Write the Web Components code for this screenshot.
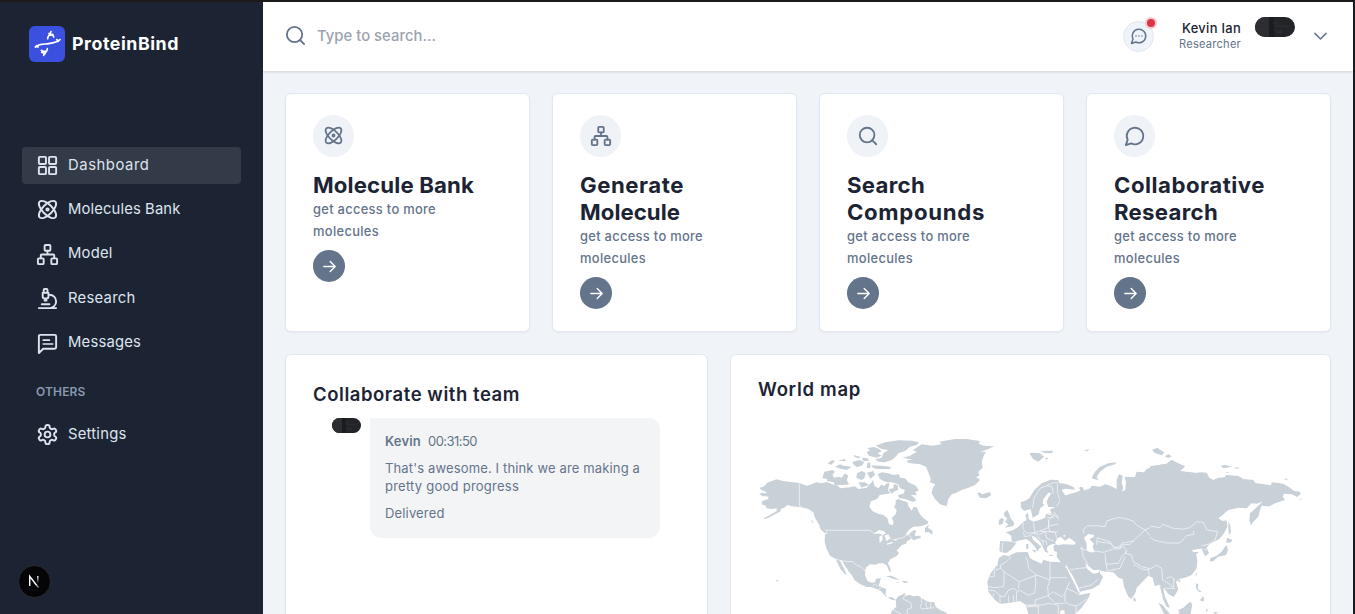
<!DOCTYPE html>
<html lang="en">
<head>
<meta charset="utf-8">
<title>ProteinBind</title>
<style>
html,body{margin:0;height:100%;overflow:hidden}
body{font-family:Inter,"Open Sans",sans-serif;font-size:14.8px;color:#64748b;background:#f0f3f8}
</style>
</head>
<body>
<pb-app></pb-app>
<script>
const define = (name, html, init) => customElements.define(name, class extends HTMLElement {
  connectedCallback() {
    if (this.shadowRoot) return;
    this.attachShadow({ mode: "open" }).innerHTML = typeof html === "function" ? html(this) : html;
    if (init) init(this);
  }
});

/* A single line of text, tracked to the width in its w attribute. */
define("pb-text", `<style>:host{display:block;white-space:nowrap}span{display:inline-block;margin-top:-1px;padding-bottom:1px;vertical-align:top}</style><span><slot></slot></span>`, el => {
  const span = el.shadowRoot.querySelector("span");
  const natural = span.getBoundingClientRect().width;
  const target = parseFloat(el.getAttribute("w"));
  if (target) span.style.letterSpacing = ((target - natural) / el.textContent.length).toFixed(3) + "px";
});

const ICONS = {
  grid: '<rect x="3" y="3" width="7.4" height="7.4" rx="1"/><rect x="13.6" y="3" width="7.4" height="7.4" rx="1"/><rect x="3" y="13.6" width="7.4" height="7.4" rx="1"/><rect x="13.6" y="13.6" width="7.4" height="7.4" rx="1"/>',
  atom: '<circle cx="12" cy="12" r="1.2"/><path d="M20.2 20.2c2.04-2.03.02-7.36-4.5-11.9-4.54-4.52-9.87-6.54-11.9-4.5-2.04 2.03-.02 7.36 4.5 11.9 4.54 4.52 9.87 6.54 11.9 4.5Z"/><path d="M15.7 15.7c4.52-4.54 6.54-9.87 4.5-11.9-2.03-2.04-7.36-.02-11.9 4.5-4.52 4.54-6.54 9.87-4.5 11.9 2.03 2.04 7.36.02 11.9-4.5Z"/>',
  tree: '<rect x="9" y="2" width="6" height="6" rx="1"/><rect x="2" y="16" width="6" height="6" rx="1"/><rect x="16" y="16" width="6" height="6" rx="1"/><path d="M5 16v-3a1 1 0 0 1 1-1h12a1 1 0 0 1 1 1v3M12 8v4"/>',
  scope: '<path d="M6 18h8M3 22h18M14 22a7 7 0 1 0 0-14h-1M9 14h2M9 12a2 2 0 0 1-2-2V6h6v4a2 2 0 0 1-2 2ZM12 6V3a1 1 0 0 0-1-1H9a1 1 0 0 0-1 1v3"/>',
  message: '<path d="M21 16a1.500 1.500 0 0 1-1.500 1.500H7.500L3 22V4.500A1.500 1.500 0 0 1 4.500 3h15A1.500 1.500 0 0 1 21 4.500Z"/><path stroke-width="1.700" d="M7.500 8.500h6.500M7.500 12.500h10"/>',
  gear: '<path d="M12.22 2h-.44a2 2 0 0 0-2 2v.18a2 2 0 0 1-1 1.73l-.43.25a2 2 0 0 1-2 0l-.15-.08a2 2 0 0 0-2.73.73l-.22.38a2 2 0 0 0 .73 2.73l.15.1a2 2 0 0 1 1 1.72v.51a2 2 0 0 1-1 1.74l-.15.09a2 2 0 0 0-.73 2.73l.22.38a2 2 0 0 0 2.73.73l.15-.08a2 2 0 0 1 2 0l.43.25a2 2 0 0 1 1 1.73V20a2 2 0 0 0 2 2h.44a2 2 0 0 0 2-2v-.18a2 2 0 0 1 1-1.73l.43-.25a2 2 0 0 1 2 0l.15.08a2 2 0 0 0 2.73-.73l.22-.39a2 2 0 0 0-.73-2.73l-.15-.08a2 2 0 0 1-1-1.74v-.5a2 2 0 0 1 1-1.74l.15-.09a2 2 0 0 0 .73-2.73l-.22-.38a2 2 0 0 0-2.73-.73l-.15.08a2 2 0 0 1-2 0l-.43-.25a2 2 0 0 1-1-1.73V4a2 2 0 0 0-2-2z"/><circle cx="12" cy="12" r="3"/>',
  search: '<circle cx="11" cy="11" r="8"/><path d="m21 21-4.3-4.3"/>',
  chat: '<path d="M7.9 20A9 9 0 1 0 4 16.1L2 22Z"/>',
  dots: '<path d="M7.9 20A9 9 0 1 0 4 16.1L2 22Z"/><path d="M8 12h.01M12 12h.01M16 12h.01"/>',
  arrow: '<path d="M4 12h16M13 5l7 7-7 7"/>',
  down: '<path d="m3 7 9 9 9-9"/>'
};
define("pb-icon", el => `<style>:host{display:block;flex:none}svg{display:block}</style>
<svg width="${el.getAttribute("size")}" height="${el.getAttribute("size")}" viewBox="0 0 24 24" fill="none" stroke="currentColor" stroke-width="${el.getAttribute("stroke") || 2}" stroke-linecap="round" stroke-linejoin="round">${ICONS[el.getAttribute("name")]}</svg>`);

define("pb-avatar", `<style>:host{display:block;flex:none;border-radius:99px;overflow:hidden}svg{display:block;width:100%;height:100%}</style>
<svg viewBox="0 0 40 20" preserveAspectRatio="none"><path fill="#222427" d="M0 0h40v20H0z"/><path fill="#2b2d31" d="M0 0h14v20H0z"/><path fill="#1b1c1f" d="M14 0h5v20h-5z"/><path stroke="#34363a" stroke-width=".7" d="M3 4h7M2 8h3M3 13h9M18 6h5M20 9h14M20 14h7M22 15.5h5"/></svg>`);

define("pb-nav-item", el => `<style>
:host{display:flex;align-items:center;gap:9px;height:37px;padding:0 14px;border-radius:4px;color:#dee4ee}
:host([active]){background:#333a48}
pb-icon{width:23px}</style>
<pb-icon name="${el.getAttribute("icon")}" size="${el.getAttribute("size") || 23}"></pb-icon><pb-text w="${el.getAttribute("w")}">${el.getAttribute("label")}</pb-text>`);

define("pb-sidebar", `<style>
:host{display:flex;flex-direction:column;width:263px;flex:none;background:#1c2434;box-sizing:border-box;padding:24px 22px 0;position:relative}
.brand{display:flex;align-items:center;gap:7px;padding-left:7px;height:36px;color:#fff;font-weight:650;font-size:17.8px}
.brand svg{display:block}
nav{display:flex;flex-direction:column;gap:7.4px;margin-top:85px}
h3{margin:20.500px 0 0;padding-left:14px;font-size:12px;line-height:22px;font-weight:600;color:#8a99af}
.last{margin-top:12px}
.dev{position:absolute;left:18px;bottom:16px;width:33px;height:33px;border-radius:50%;background:#050507;border:1.5px solid #2b2b2d;box-sizing:border-box}
.dev svg{display:block}
</style>
<div class="brand"><svg width="36" height="36" viewBox="87 78 108 108"><rect x="87" y="78" width="108" height="108" rx="18" fill="#3c50e0"/><g fill="none" stroke="#fff" stroke-width="5" stroke-linecap="round" stroke-linejoin="round"><path d="M106 141C115 134 123 132 134 132S154 129 161 128S176 123 180 119M170 119l5 5M109 137l5 4"/><path d="M143 116C143 107 151 103 153 95M147 100l8 5M147 106l11-3 3 8"/><path d="M124 151l5 3 9 0M125 157l10 4M142 146C142 156 133 159 131 166" /></g></svg><pb-text w="107">ProteinBind</pb-text></div>
<nav>
<pb-nav-item active icon="grid" w="81.5" label="Dashboard"></pb-nav-item>
<pb-nav-item icon="atom" w="112.5" label="Molecules Bank"></pb-nav-item>
<pb-nav-item icon="tree" w="44.5" label="Model"></pb-nav-item>
<pb-nav-item icon="scope" w="67.5" label="Research"></pb-nav-item>
<pb-nav-item icon="message" w="73" label="Messages"></pb-nav-item>
</nav>
<h3><pb-text w="49.5">OTHERS</pb-text></h3>
<pb-nav-item class="last" icon="gear" w="58.5" label="Settings"></pb-nav-item>
<div class="dev"><svg width="30" height="30" viewBox="0 0 30 30" fill="none" stroke-width="1.4"><defs><linearGradient id="a" x1="0" y1="0" x2="0" y2="1"><stop stop-color="#fff"/><stop offset="1" stop-color="#fff" stop-opacity="0"/></linearGradient></defs><path stroke="#fff" d="M10.700 20V10.200L18 19.700"/><path stroke="#888" d="M17.500 19l2 2.500"/><rect x="18.100" y="10" width="1.400" height="7.500" fill="url(#a)"/></svg></div>`);

define("pb-header", `<style>
:host{display:flex;align-items:center;height:69px;background:#fff;box-shadow:0 1px 3px #0002;padding:0 21px;flex:none;position:relative;box-sizing:border-box}
.s{margin-bottom:2px}
.q{margin-left:10px;color:#9ca3af;font-weight:500;flex:1}
.bell{position:relative;width:31px;height:31px;border:1px solid #e2e8f0;border-radius:50%;background:#eff4fb;box-sizing:border-box;display:grid;place-items:center}
.bell pb-icon{margin-bottom:2px}
.bell i{position:absolute;right:-2px;top:-3px;width:8px;height:8px;border-radius:50%;background:#dc3545;box-shadow:0 0 0 2px #f6c9cf}
.who{margin-left:25px;text-align:right;display:grid;justify-items:end}
.n{font-size:12.9px;font-weight:550;color:#1c2434;line-height:17px}
.r{font-size:11.1px;line-height:14px}
pb-avatar{width:40px;height:20px;margin:-19px 0 0 14px}
.d{margin:0 4px 0 18px}
</style>
<pb-icon class="s" name="search" size="23" stroke="1.900"></pb-icon><pb-text class="q" w="119">Type to search...</pb-text>
<div class="bell"><pb-icon name="dots" size="18"></pb-icon><i></i></div>
<div class="who"><pb-text class="n" w="59">Kevin Ian</pb-text><pb-text class="r" w="62">Researcher</pb-text></div>
<pb-avatar></pb-avatar><pb-icon class="d" name="down" size="15" stroke="2.400"></pb-icon>`);

define("pb-card", `<style>:host{display:block;box-sizing:border-box;background:#fff;border:1px solid #e2e8f0;border-radius:6px;box-shadow:0 1px 2px #0000000d;padding:0 27px;min-width:0;color:#64748b}</style><slot></slot>`);

define("pb-feature", el => `<style>
:host{display:block;min-width:0}
pb-card{height:239px;padding-top:21px}
.ic{width:41.4px;height:42px;border-radius:50%;background:#eff2f7;display:grid;place-items:center}
.ic pb-icon{margin-bottom:1px}
.t{font-size:22.2px;line-height:27px;font-weight:650;color:#1c2434;margin-top:15px}
.s{font-size:12.9px;line-height:22px;font-weight:500;margin-top:1px}
.go{width:32.3px;height:32px;border-radius:50%;background:#64748b;color:#fff;display:grid;place-items:center;margin-top:6px}
</style><pb-card><div class="ic"><pb-icon name="${el.getAttribute("icon")}" size="${el.getAttribute("size")}"></pb-icon></div>
<div class="t">${el.getAttribute("lines").split("|").map(l => { const [t, w] = l.split(":"); return `<pb-text w="${w}">${t}</pb-text>`; }).join("")}</div>
<div class="s"><pb-text w="123">get access to more</pb-text><pb-text w="66">molecules</pb-text></div>
<div class="go"><pb-icon name="arrow" size="17" stroke="2"></pb-icon></div></pb-card>`);

define("pb-chat", `<style>
:host{display:block;min-width:0}
pb-card{height:330px}
h4{margin:26px 0 0;font-size:18.5px;line-height:28px;font-weight:620;color:#1c2434}
.m{display:flex;align-items:flex-start;gap:9px;margin:9px 0 0 19px}
pb-avatar{width:29px;height:15px}
.b{width:290px;height:120px;box-sizing:border-box;background:#f3f4f6;border-radius:0 11px 11px 11px;padding:15px 15px;font-size:13px;line-height:18px}
.top{display:flex;gap:7px}.k{font-weight:600}.p{margin:9px 0}
</style><pb-card><h4><pb-text w="207">Collaborate with team</pb-text></h4>
<div class="m"><pb-avatar></pb-avatar><div class="b"><div class="top"><pb-text class="k" w="36">Kevin</pb-text><pb-text w="49">00:31:50</pb-text></div>
<div class="p"><pb-text w="255">That's awesome. I think we are making a</pb-text><pb-text w="134">pretty good progress</pb-text></div><pb-text w="59.5">Delivered</pb-text></div></div></pb-card>`);

define("pb-world", `<style>
:host{display:block}svg{display:block}
.l{fill:#c8d0d8;stroke:none}.s{fill:#fff;stroke:none}.b{fill:none;stroke:#f4f6f9;stroke-width:2.3;stroke-linejoin:round}
</style>
<svg width="545" height="177" viewBox="39 36 1635 531">
<g>
<path class="l" d="M42 206L52 204 66 205 62 200 48 194 44 188 58 184 66 174 80 168 95 163 110 167 130 170 163 174 185 182 200 178 215 172 230 175 245 171 262 178 280 182 285 190 315 187 330 184 340 192 365 188 372 180 380 172 384 164 388 182 400 190 410 178 416 184 430 172 433 180 428 195 436 205 418 208 404 210 400 218 390 225 378 228 373 245 382 258 400 266 415 270 427 279 432 297 443 301 446 290 440 280 452 268 455 255 447 245 452 238 452 226 460 222 475 228 487 232 490 243 500 258 505 246 515 247 524 266 536 280 550 290 548 296 528 304 505 305 490 316 480 332 494 323 508 315 515 318 509 326 510 333 525 332 528 338 505 346 500 340 484 350 484 356 470 360 462 370 455 376 462 385 455 393 437 402 429 414 436 430 438 441 432 438 426 422 415 415 400 415 392 419 375 418 362 428 360 450 367 468 380 473 390 472 393 461 408 459 403 476 400 482 415 488 424 493 421 508 428 518 440 516 452 524 445 526 435 522 420 512 408 498 395 492 378 486 365 486 345 477 328 465 322 452 312 440 298 420 290 405 285 406 290 418 298 432 305 451 298 446 285 430 272 402 255 392 245 372 239 352 240 328 248 325 245 315 228 310 220 295 210 280 205 262 190 252 175 248 160 246 140 244 128 240 120 247 108 252 105 260 90 268 75 276 60 282 56 280 75 270 95 258 95 250 80 252 65 250 62 242 50 238 52 228 70 222 70 215 50 212Z"/>
<path class="l" d="M388 66L402 72 410 78 398 85 410 92 395 98 372 92 365 82 375 76 367 69ZM392 62L420 52 460 46 500 47 522 52 515 60 495 65 480 78 460 85 452 95 440 105 420 112 400 110 390 103 410 98 415 85 430 75 410 72ZM378 121L410 122 438 126 435 132 400 132 385 130ZM398 148L410 142 430 145 445 150 462 148 465 158 480 160 490 172 512 182 522 197 511 200 515 211 498 210 515 225 505 231 480 222 462 219 459 210 475 206 480 195 465 190 460 178 440 172 420 170 405 162ZM248 160L262 150 268 158 280 155 290 158 300 145 310 152 305 165 312 178 295 180 270 180 265 172 245 168ZM232 160L238 140 262 135 270 140 262 150 248 162ZM336 145L350 138 362 144 358 160 350 165 334 158ZM270 125L285 118 295 122 320 125 305 135 280 130ZM248 115L262 105 270 108 258 120ZM280 108L300 101 302 108ZM325 90L348 96 340 100 328 95ZM322 110L345 105 358 112 350 122 335 126 325 118ZM350 98L368 100 372 108 355 108ZM368 112L376 114 376 130 365 128ZM366 143L385 138 390 150 376 161ZM340 172L360 172 372 180 350 188ZM430 192L445 190 446 177 458 180 460 195 450 198 440 206ZM222 304L235 310 248 322 240 325 228 314ZM198 284L203 288 206 294 201 292ZM422 453L438 452 458 461 465 465 448 463ZM470 468L484 468 490 472 478 474ZM94 465h5v4h-5zM455 471h6v2h-6zM552 298L540 310 540 322 552 322 562 329 563 318 555 312 549 309Z"/>
<path class="l" d="M437 567L442 556 454 545 452 525 460 514 470 510 480 503 480 512 495 510 505 514 520 512 528 518 540 526 550 530 568 532 572 545 585 555 600 561 608 567Z"/>
<path class="s" d="M384 326L402 315 416 318 423 325 414 330 404 326ZM404 355L403 335 412 330 413 345ZM418 332L430 328 437 340 426 348ZM424 356L443 350 444 354 427 359ZM440 344L456 342 454 347ZM482 327L500 318 492 329Z"/>
<path class="b" d="M163 174V243L175 250 188 252 208 276 222 302M246 316H375L385 324M422 334L424 348M456 341L476 338 486 328 495 333 500 340M272 402L290 408 322 410 335 420 350 427 360 438M383 484L390 476 398 484M400 493L412 487M445 555L470 567M480 510L474 522 497 533 500 549 487 553 487 567M530 518L530 536 525 543 530 552M544 529L542 540 548 552M558 532L556 549M530 552L568 548"/>
</g>
<g transform="translate(465)">
<path class="l" d="M8 98L30 92 50 80 38 76 65 58 95 62 125 58 118 50 165 42 200 42 240 48 236 56 250 62 282 64 265 72 240 82 258 80 250 95 245 110 248 128 235 140 238 152 228 156 240 164 225 180 205 188 185 195 165 205 155 208 145 222 140 244 120 238 105 222 95 205 98 190 106 178 90 172 92 160 88 150 78 125 60 118 25 114 20 106 40 105ZM232 205L240 202 245 208 270 201 274 210 258 220 240 218ZM388 85L400 83 420 85 432 95 415 110 400 103ZM420 78L460 77 455 85 435 84ZM435 98L447 99 438 104ZM552 75L570 73 560 79ZM313 262L322 255 328 268 332 280 343 295 340 303 315 308 325 298 315 290 322 280 312 272ZM297 285L306 278 312 284 308 297 296 300ZM395 374L408 376 405 383ZM378 357h7v15h-6zM446 389L460 390 458 393 446 392ZM484 391L494 387 490 394Z"/>
<path class="l" d="M362 232L374 228 388 220 402 196 425 175 452 164 474 165 478 174 500 178 522 187 524 194 495 191 485 195 497 214 504 218 507 208 520 204 537 206 545 202 540 186 548 187 552 198 570 190 600 186 600 430 545 425 500 415 498 385 480 384 462 378 460 362 470 356 455 358 443 364 440 372 445 384 435 380 428 365 420 350 405 335 395 333 400 345 415 358 425 366 418 370 412 380 405 365 388 348 378 342 365 345 350 348 345 360 335 372 320 384 305 382 298 378 300 348 335 350 334 332 317 322 340 315 355 305 370 290 380 285 376 270 384 263 386 282 400 290 425 283 435 278 438 266 455 266 450 254 465 246 445 246 440 230 444 220 454 205 445 203 430 222 428 235 433 240 420 250 416 268 398 278 392 252 372 258 363 248Z"/>
<path class="l" d="M600 478L575 492 537 500 540 510 571 503 565 520 545 548 525 567 385 567 378 540 360 528 340 532 300 537 285 525 265 500 262 470 272 445 292 420 296 400 310 390 325 393 350 382 383 381 390 400 400 405 425 416 430 404 450 410 480 412 500 415 600 415Z"/>
<path class="s" d="M468 354L472 340 482 335 495 347 508 333 512 341 528 353 523 360 505 358 490 358 472 361ZM493 337L488 332 498 329ZM491 416L500 430 515 460 528 485 535 501 540 500 534 485 520 455 505 432 500 418 498 430ZM482 556L493 556 494 567 480 567Z"/>
<path class="b" d="M398 250L402 220 420 190 440 182 456 185 460 206M440 182L456 174 472 172 472 200 480 228 470 245M370 292L368 310 380 325 405 322 400 290M405 322L420 318 445 308 447 284 462 270 440 268M447 284L445 308 450 302 480 296 475 280 462 270M445 308L450 320 470 322 480 310 520 320 520 333 500 334M440 278L462 278M462 260L468 270 480 280 488 300M335 350L350 352M370 322L374 335 390 332 400 325 420 328 435 320 450 320 466 322 470 340M410 330L422 345 440 350 440 360M435 320L440 340 462 348M420 318L437 320M308 352L306 380M428 345L430 360M550 310L556 303 600 303M550 310L552 325M540 350L560 356 552 368 560 372 545 380M536 372L545 380 555 415M500 405L540 380M520 385L525 400 500 410M296 421H275M301 430V421L320 410 332 398 326 392M262 455H283V436L301 430M301 430L313 440 311 485 280 488 262 483M311 440L358 470 405 452 410 450 385 430 384 412 377 395M405 452L408 468 404 505 384 510 360 496 355 500 340 490 325 496 312 516M358 470L355 490M410 450L450 465V410M450 458H500M450 465L443 485 445 512 405 525 406 540 382 545M445 512L460 500 485 515 495 505 500 490 510 470M500 490L522 500 540 510M495 505L495 530 510 540 530 543 560 522M262 495L285 498 300 512 311 516M300 512L300 536M326 512L325 533M340 510L340 530M350 500L349 529M378 540L405 540 430 540 445 535 475 540 475 567M443 512L465 535 495 535M528 543V567M415 540V567M382 545H415M283 505L278 515M498 413L515 428 535 430 560 420M537 485L570 480 590 462"/>
</g>
<g transform="translate(825)">
<path class="l" d="M120 215L160 205 180 197 178 187 187 188 190 197 210 192 215 182 240 185 255 178 270 182 290 192 290 165 297 148 308 152 305 175 310 190 304 200 316 194 318 172 314 155 345 157 350 140 372 142 380 132 405 122 440 116 455 105 475 115 495 124 480 138 540 145 550 370 515 376 530 392 532 410 518 440 500 455 482 460 468 470 474 495 462 515 450 508 445 496 430 490 434 512 442 530 450 548 440 545 430 525 424 500 418 478 405 484 398 458 385 452 370 468 350 488 346 505 334 522 325 515 312 485 308 462 296 458 280 442 255 440 235 436 242 448 249 456 240 474 205 492 175 502 150 470 132 425 110 395Z"/>
<path class="l" d="M215 158L225 140 240 125 265 115 290 112 285 118 260 125 240 140 230 155 235 165 220 162ZM342 515L348 525 345 531 340 525ZM415 534L428 540 440 555 450 567 432 567 424 550ZM475 555L490 548 510 530 517 538 512 567 478 567ZM396 75L412 68 420 74 433 82 425 91 405 84ZM434 94L445 88 456 94 444 99Z"/>
<path class="s" d="M192 338L205 327 222 330 220 337 208 342 222 356 218 364 224 382 210 382 200 375 200 356ZM105 354L112 340 122 335 135 347 148 338 168 353 163 359 130 358 112 361ZM133 337L128 332 138 329ZM130 417L140 430 155 460 168 485 175 501 180 500 174 485 160 455 145 432 140 418 138 430ZM195 414L205 422 220 435 240 434 235 443 220 446 202 432Z"/>
<path class="b" d="M192 325L190 315 200 303 230 302 255 305 260 288 295 277 320 282 340 288 350 300 375 315 340 348 305 355 300 370 280 365 270 350 232 338 230 360M232 350L270 355 285 370 305 360 330 358 340 348M225 378L250 382 280 372 295 372 310 365 320 376 315 385 335 390 340 410 365 425 395 432 420 420 430 430 425 450 430 465 450 460 465 458M375 315L395 305 425 308 430 298 460 310 480 310 520 320 520 328 500 332 480 352 440 352 400 345 388 330 375 315M255 385L258 415 262 440M258 418L295 415 305 395 320 380M262 438L300 430 315 395M180 370L205 378 225 378M185 365L190 395 205 420M340 418L365 432 385 435M385 432L388 452M395 432L400 455M400 455L412 430M428 465L422 485M430 468L445 478 462 488 455 505M445 460L462 480 470 490M520 300L530 290 540 290M150 435L175 430 200 428M175 490L215 480 235 462M355 485L380 458"/>
</g>
<g transform="translate(1215)">
<path class="l" d="M0 124L50 116 65 105 75 115 105 123 90 138 130 146 150 142 170 143 178 158 190 165 205 158 225 157 228 150 265 153 280 162 310 165 316 174 362 181 366 172 400 176 420 188 432 198 450 200 452 206 442 216 425 208 403 206 398 214 405 225 375 235 358 244 335 242 330 255 325 275 310 290 303 301 298 287 300 265 322 245 337 230 320 236 305 235 290 250 265 248 235 255 215 272 205 280 218 288 230 286 232 305 222 325 208 342 190 352 178 358 170 368 177 385 165 394 158 378 152 362 140 365 125 372 128 382 147 380 134 392 142 407 140 430 125 450 105 458 85 462 76 472 84 490 70 515 55 507 42 490 30 478 15 482 8 455 0 450Z"/>
<path class="l" d="M235 288L241 302 243 322 237 330 235 310ZM232 338L248 345 240 353 228 352ZM230 360L234 375 228 390 205 395 190 408 181 410 180 400 200 392 215 380 225 365ZM137 446L142 443 138 456ZM138 475L145 478 143 492 155 500 148 502 138 490ZM155 513L163 519 160 530 148 525 156 520ZM84 465L92 466 88 473ZM212 123L225 119 245 125 220 130ZM252 127L270 128 260 132ZM228 141L240 142 230 144ZM402 161L416 161 408 165ZM447 221L456 222 452 225ZM190 560L205 562 195 567ZM168 553L173 553 172 560 168 559Z"/>
<path class="b" d="M0 303L30 308 38 298 70 310 100 312 120 308 140 290 160 292 170 315 203 320 195 345 175 358 155 362M130 318L132 328 110 332 90 354 50 354 10 345 0 335M162 375L175 370M0 432L20 420 35 430 38 465 55 475 70 488 72 460M48 460L62 455 75 465M42 490L75 490"/>
</g>
</svg>`);

define("pb-map", `<style>
:host{display:block;min-width:0}pb-card{height:330px;overflow:hidden}
h4{margin:21px 0 33px;font-size:18.5px;line-height:28px;font-weight:620;color:#1c2434}
</style><pb-card><h4><pb-text w="103">World map</pb-text></h4><pb-world></pb-world></pb-card>`);

define("pb-app", `<style>
:host{display:flex;height:100vh;box-sizing:border-box;border-top:2px solid #1c191b;border-right:2px solid #191d22;overflow:hidden}
.main{flex:1;min-width:0;display:flex;flex-direction:column}
.row{display:grid;column-gap:22px;padding:22px 22px 0}
.a{grid-template-columns:repeat(4,1fr)}.b{grid-template-columns:423px 1fr}
</style><pb-sidebar></pb-sidebar><div class="main"><pb-header></pb-header>
<div class="row a">
<pb-feature icon="atom" size="21" lines="Molecule Bank:161"></pb-feature>
<pb-feature icon="tree" size="22" lines="Generate:104|Molecule:100"></pb-feature>
<pb-feature icon="search" size="22" lines="Search:78|Compounds:138"></pb-feature>
<pb-feature icon="chat" size="22" lines="Collaborative:151|Research:104"></pb-feature>
</div>
<div class="row b"><pb-chat></pb-chat><pb-map></pb-map></div></div>`);
</script>
</body>
</html>
